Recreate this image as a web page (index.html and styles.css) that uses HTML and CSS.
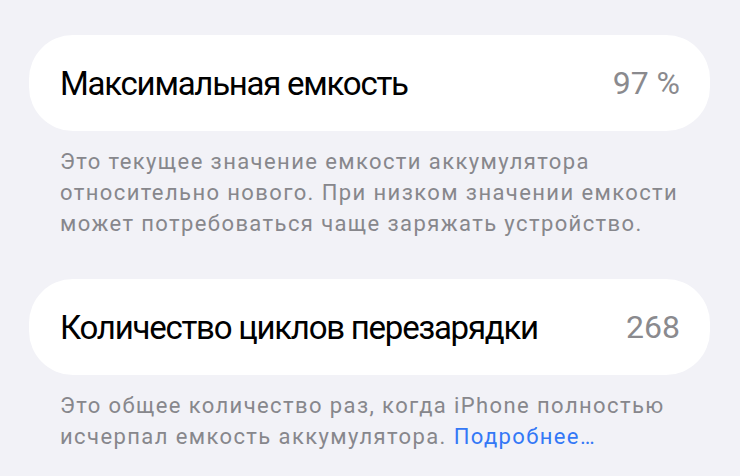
FILE: index.html
```html
<!DOCTYPE html>
<html lang="ru">
<head>
<meta charset="utf-8">
<link rel="stylesheet" href="styles.css">
</head>
<body>
<main class="page">
  <section class="group first">
    <div class="card">
      <span class="label">Максимальная емкость</span>
      <span class="value">97 %</span>
    </div>
    <p class="note">Это текущее значение емкости аккумулятора<br>относительно нового. При низком значении емкости<br>может потребоваться чаще заряжать устройство.</p>
  </section>
  <section class="group second">
    <div class="card">
      <span class="label">Количество циклов перезарядки</span>
      <span class="value">268</span>
    </div>
    <p class="note">Это общее количество раз, когда iPhone полностью<br>исчерпал емкость аккумулятора. <a class="link" href="#">Подробнее…</a></p>
  </section>
</main>
</body>
</html>
```
FILE: styles.css
```css
html, body {
  margin: 0;
  padding: 0;
  background: #f2f2f7;
}
body {
  font-family: Roboto, "Liberation Sans", sans-serif;
  width: 740px;
  height: 476px;
  overflow: hidden;
}
.page {
  display: flex;
  flex-direction: column;
  padding: 35px 30px 0 29px;
}
.group.second {
  margin-top: 40px;
}
.card {
  height: 96px;
  background: #ffffff;
  border-radius: 44px;
  display: flex;
  align-items: center;
  justify-content: space-between;
  padding: 0 30px 0 31px;
}
.label {
  font-size: 33px;
  color: #000000;
  letter-spacing: -1.25px;
}
.value {
  font-size: 32px;
  color: #8a8a8e;
}
.note {
  margin: 0;
  padding: 15px 0 0 31px;
  font-size: 22px;
  line-height: 31px;
  letter-spacing: 1.4px;
  color: #87878c;
  white-space: nowrap;
}
.link {
  color: #3478f6;
  text-decoration: none;
}
```
